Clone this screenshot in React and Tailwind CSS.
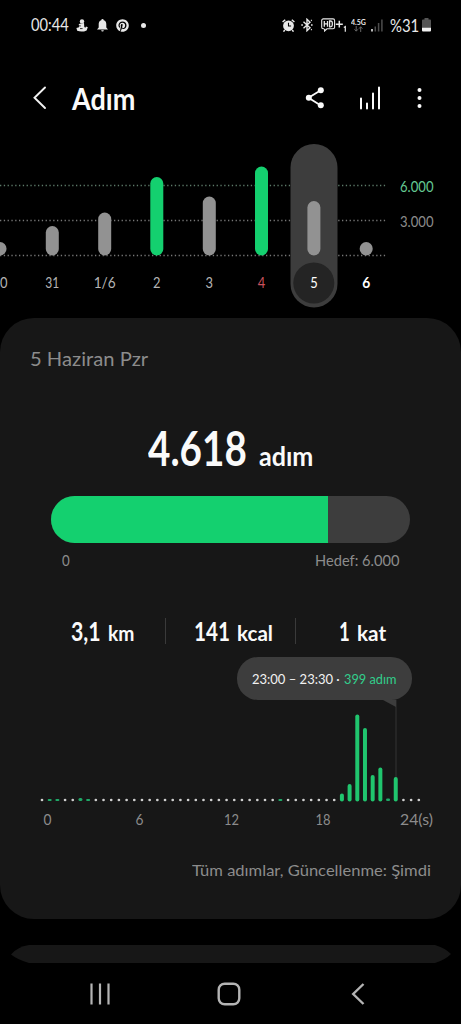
import { useLayoutEffect, useRef } from 'react';
import { FaPinterest } from 'react-icons/fa';

// Text condensed or widened so that it fills exactly `w` pixels.
function Fit({ w, className = '', children }) {
  const inner = useRef(null);
  useLayoutEffect(() => {
    inner.current.style.transform = `scaleX(${w / inner.current.offsetWidth})`;
  }, [w, children]);
  return (
    <span className={`inline-block shrink-0 whitespace-nowrap ${className}`} style={{ width: w }}>
      <span ref={inner} className="inline-block origin-left">{children}</span>
    </span>
  );
}

function ChartText({ x, w, y, size = 14, fill = '#b4b4b4', weight = 400, children }) {
  return (
    <text x={x} y={y} fontSize={size} fill={fill} fontWeight={weight} textLength={w} lengthAdjust="spacingAndGlyphs">
      {children}
    </text>
  );
}

function StatusBar() {
  return (
    <div className="flex h-[50px] items-center pl-[31px] pr-[30px] text-[#e8e8e8]">
      <Fit w={38} className="text-[17px] leading-5">00:44</Fit>
      <svg className="ml-[7px] shrink-0" width="12" height="13" viewBox="0 0 12 13" fill="#e8e8e8">
        <circle cx="6" cy="2.4" r="2.2" />
        <path d="M2.8 5 L8 4 L8.3 8 L9.4 8.8 L10 7.6 L11.8 8.2 L10.6 11.4 Q6 13.6 1.2 11.8 L.4 9 L3 8.2Z" />
        <path d="M1.8 6.9h3M4 9.6h2.6" stroke="#000" strokeWidth=".8" />
      </svg>
      <svg className="ml-[8.5px] shrink-0" width="11" height="13" viewBox="0 0 11 13" fill="#e8e8e8">
        <path d="M5.5 0a1.2 1.2 0 0 1 1.2 1.2C8.7 1.8 9.3 3.3 9.3 5.2V8.5L11 10.6H0L1.7 8.5V5.2C1.7 3.3 2.3 1.8 4.3 1.2A1.2 1.2 0 0 1 5.5 0ZM4.2 11.3h2.6a1.3 1.3 0 0 1-2.6 0Z" />
      </svg>
      <FaPinterest className="ml-[8px] size-[13px] shrink-0" />
      <span className="ml-[12.5px] size-[5px] shrink-0 rounded-full bg-[#e8e8e8]" />

      <svg className="ml-auto shrink-0" width="13" height="13" viewBox="0 0 13 13">
        <circle cx="6.5" cy="6.8" r="5.4" fill="#e8e8e8" />
        <path d="M.6 3 3.2.8M9.8.8 12.4 3M2.8 11 1.5 12.6M10.2 11l1.3 1.6" stroke="#e8e8e8" strokeWidth="1.5" />
        <path d="M6.5 3.7V7h2.6" fill="none" stroke="#000" strokeWidth="1.1" />
      </svg>
      <svg className="ml-[6px] shrink-0" width="12" height="14" viewBox="0 0 12 14" fill="none" stroke="#e8e8e8" strokeWidth="1.4">
        <path d="M2.5 3.8 9 9.8 6 12.7V1.3L9 4.2 2.5 10.2" />
        <path d="M.3 7h1.6M10 7h1.6M10 2.6l.8-.5M10 11.4l.8.5" />
      </svg>
      <svg className="ml-[8px] shrink-0" width="27" height="14" viewBox="0 0 27 14" fill="none" stroke="#e8e8e8" strokeWidth="1.1">
        <path d="M3 10.8H2.3A1.6 1.6 0 0 1 .7 9.2V2.5A1.600 1.600 0 0 1 2.300.9H12A1.600 1.600 0 0 1 13.600 2.500V9.200A1.600 1.600 0 0 1 12 10.800H6L3.600 13V10.800" />
        <path d="M3.300 3v5.800M6.500 3v5.800M3.300 5.900h3.200M8.600 3v5.800h1a1.700 1.700 0 0 0 1.700-1.700V4.700A1.700 1.700 0 0 0 9.600 3Z" strokeWidth="1.300" />
        <path d="M14.800 6.200h7M18.300 2.800v6.800" strokeWidth="1.500" />
        <path d="M22.800 9.400l1.500-.9v5.200" strokeWidth="1.200" />
      </svg>
      <span className="ml-[3px] flex w-[15px] shrink-0 flex-col items-center">
        <Fit w={15} className="text-[7.5px] font-bold leading-[7px]">4.5G</Fit>
        <svg width="9" height="6" viewBox="0 0 9 6" fill="none" stroke="#666" strokeWidth="1">
          <path d="M2.200 0v5M.5 3.300l1.700 1.900 1.700-1.900M6.700 6V.8M5 2.700 6.700.8l1.700 1.900" />
        </svg>
      </span>
      <svg className="ml-[5px] shrink-0" width="12" height="13" viewBox="0 0 12 13">
        <path d="M1 10v2.500" stroke="#e8e8e8" strokeWidth="1.6" />
        <path d="M4.300 7.500v5M7.600 4v8.500M10.900.5v12" stroke="#4d4d4d" strokeWidth="1.500" />
      </svg>
      <Fit w={29} className="ml-[7px] text-[18px] leading-5">%31</Fit>
      <svg className="ml-[3px] shrink-0" width="9" height="14" viewBox="0 0 9 14">
        <path d="M2.500 0h4v1.500H8a1 1 0 0 1 1 1V10H0V2.500a1 1 0 0 1 1-1h1.500Z" fill="#555" />
        <path d="M0 9.800h9V12.500a1 1 0 0 1-1 1H1a1 1 0 0 1-1-1Z" fill="#f2f2f2" />
      </svg>
    </div>
  );
}

function Header() {
  return (
    <header className="mt-[2px] flex h-[92px] items-center pl-[33px] pr-[39px]">
      <svg width="14" height="24" viewBox="0 0 14 24" fill="none" stroke="#f2f2f2" strokeWidth="1.9" strokeLinecap="round">
        <path d="M12 1.500 1.500 11.800 12 22" />
      </svg>
      <Fit w={63} className="ml-[25px] text-[30px] font-bold leading-9 text-[#fafafa]">Adım</Fit>
      <svg className="ml-auto" width="20" height="22" viewBox="0 0 20 22" fill="#fafafa">
        <path d="M15.800 3.300 3.500 10.800l12.300 7.600" fill="none" stroke="#fafafa" strokeWidth="1.800" />
        <circle cx="15.800" cy="3.300" r="3" />
        <circle cx="3.800" cy="10.800" r="3" />
        <circle cx="15.800" cy="18.300" r="3" />
      </svg>
      <svg className="ml-[34px]" width="23" height="24" viewBox="0 0 23 24" stroke="#fafafa" strokeWidth="2" strokeLinecap="round">
        <path d="M2 12.500V22.500M8 17.500v5M14 7.500v15M20 1.500v21" />
      </svg>
      <svg className="ml-[35px]" width="5" height="20" viewBox="0 0 5 20" fill="#fafafa">
        <circle cx="2.500" cy="2" r="2" />
        <circle cx="2.500" cy="10" r="2" />
        <circle cx="2.500" cy="18" r="2" />
      </svg>
    </header>
  );
}

const days = [
  { x: 0, top: 98, label: '30', w: 15 },
  { x: 52.3, top: 82, label: '31', w: 14 },
  { x: 104.7, top: 68.500, label: '1/6', w: 22 },
  { x: 156.800, top: 33, label: '2', w: 7.500, goal: true },
  { x: 209.300, top: 52.500, label: '3', w: 7.500 },
  { x: 261.500, top: 22.500, label: '4', w: 7.500, goal: true, color: '#c9515d' },
  { x: 313.900, top: 57, label: '5', w: 7.500, color: '#ffffff' },
  { x: 366.200, top: 98, label: '6', w: 8, color: '#ffffff', weight: 700 },
];

function WeekChart() {
  return (
    <svg className="block" width="461" height="174" viewBox="0 0 461 174">
      <g strokeWidth="1.300" strokeDasharray="1.300 2.500">
        <path d="M0 41.500H386" stroke="#5c7a69" />
        <path d="M0 76.500H386" stroke="#777" />
        <path d="M0 111.500H386" stroke="#777" />
      </g>
      <rect x="290.500" y="0" width="47" height="163.500" rx="23.500" fill="#3d3d3d" />
      <circle cx="313.800" cy="139" r="20.500" fill="#242424" />
      {days.map((d) => (
        <g key={d.label}>
          <rect x={d.x - 6.500} y={d.top} width="13" height={111.500 - d.top} rx="6.500" fill={d.goal ? '#14d06f' : '#929292'} />
          <ChartText x={d.x - d.w / 2} w={d.w} y={144} size={14.500} fill={d.color} weight={d.weight}>{d.label}</ChartText>
        </g>
      ))}
      <ChartText x={400} w={33.500} y={47.500} size={14.500} fill="#64c993">6.000</ChartText>
      <ChartText x={400} w={33.500} y={82.500} size={14.500} fill="#8c8c8c">3.000</ChartText>
    </svg>
  );
}

const slots = Array.from({ length: 50 }, (_, i) => i);
const hourly = { 1: 2, 2: 2, 5: 3, 6: 2, 31: 2, 39: 8, 40: 17.500, 41: 87, 42: 73.500, 43: 26.500, 44: 34, 45: 2.500, 46: 24.500 };

function DayChart() {
  return (
    <div className="relative mt-[13px] h-[178px]">
      <svg className="block" width="461" height="178" viewBox="0 0 461 178">
        <path d="M396 43V121" stroke="#303030" strokeWidth="1.200" />
        {slots.map((i) => {
          const x = 42 + i * 7.690;
          const h = hourly[i];
          if (!h) return <circle key={i} cx={x} cy="143" r="1.350" fill="#d0d0d0" />;
          return <rect key={i} x={x - 2} y={(h > 3 ? 144.500 : 144) - h} width="4" height={h} rx={Math.min(2, h / 2)} fill={h > 3 ? '#20c56e' : '#20a868'} />;
        })}
        <ChartText x={43.500} w={8} y={168} size={14.500} fill="#8c8c8c">0</ChartText>
        <ChartText x={135.500} w={8} y={168} size={14.500} fill="#8c8c8c">6</ChartText>
        <ChartText x={224} w={15} y={168} size={14.500} fill="#8c8c8c">12</ChartText>
        <ChartText x={315.500} w={15} y={168} size={14.500} fill="#8c8c8c">18</ChartText>
        <ChartText x={400} w={33} y={168} size={14.500} fill="#8c8c8c">24(s)</ChartText>
      </svg>
      <div className="absolute left-[237px] top-0 flex h-[43px] w-[175px] items-center rounded-[21px] bg-[#3d3d3d] pl-[15px] text-[13px] leading-5">
        <Fit w={88} className="text-[#f2f2f2]">23:00 – 23:30 ·</Fit>
        <Fit w={53} className="ml-[4px] text-[#32cf8c]">399 adım</Fit>
        <svg className="absolute left-[146px] top-[43px]" width="14" height="7" viewBox="0 0 14 7">
          <path d="M0 0H13V7Z" fill="#3d3d3d" />
        </svg>
      </div>
    </div>
  );
}

function Stat({ value, valueW, unit, unitW, className }) {
  return (
    <div className={`flex items-baseline justify-center gap-[7px] pt-[2px] font-bold leading-[26px] text-[#fafafa] ${className}`}>
      <Fit w={valueW} className="text-[27px]">{value}</Fit>
      <Fit w={unitW} className="text-[20px]">{unit}</Fit>
    </div>
  );
}

function DayCard() {
  return (
    <main className="h-[601px] rounded-[34px] bg-[#171717] pt-[31px] text-[#8c8c8c]">
      <div className="flex h-5 items-center pl-[30px]">
        <Fit w={118} className="text-[19.5px] leading-5">5 Haziran Pzr</Fit>
      </div>
      <div className="mt-[55px] flex h-[48px] items-baseline gap-[12px] pl-[148px] font-bold leading-[48px] text-[#fafafa]">
        <Fit w={99} className="text-[48px]">4.618</Fit>
        <Fit w={54} className="text-[26px]">adım</Fit>
      </div>
      <div className="mx-[51px] mt-[24px] h-[46.500px] overflow-hidden rounded-full bg-[#3d3d3d]">
        <div className="h-full w-[276.500px] bg-[#14d06f]" />
      </div>
      <div className="mt-[7.500px] flex h-5 items-center justify-between pl-[61.5px] pr-[61px] text-[15px] leading-5">
        <Fit w={8}>0</Fit>
        <Fit w={85}>Hedef: 6.000</Fit>
      </div>
      <div className="mt-[48px] flex h-[26px] items-center pl-[39px]">
        <Stat className="w-[126px]" value="3,1" valueW={30} unit="km" unitW={26} />
        <span className="h-full w-px bg-[#3a3a3a]" />
        <Stat className="w-[129px] pl-[5px]" value="141" valueW={36} unit="kcal" unitW={36} />
        <span className="h-full w-px bg-[#3a3a3a]" />
        <Stat className="w-[133px]" value="1" valueW={11} unit="kat" unitW={29} />
      </div>
      <DayChart />
      <div className="mt-[25px] flex h-5 items-center justify-end pr-[30px]">
        <Fit w={239} className="text-[16px] leading-5">Tüm adımlar, Güncellenme: Şimdi</Fit>
      </div>
    </main>
  );
}

export default function App() {
  return (
    <div className="h-[1024px] w-[461px] overflow-hidden bg-black font-['Lato','Noto_Sans',sans-serif]">
      <StatusBar />
      <Header />
      <WeekChart />
      <DayCard />
      <svg className="mt-[26px] block" width="461" height="18" viewBox="0 0 461 18">
        <path d="M11 9.500Q17 2 29 0H435Q445 3 451 9Q445 15 435 18H29Q18 15 11 9.500Z" fill="#171717" />
      </svg>
      <nav className="flex h-[61px] items-center pl-[89px] pr-[96px]">
        <svg width="22" height="22" viewBox="0 0 22 22" stroke="#b4b4b4" strokeWidth="2.200">
          <path d="M2.500 .5v21M11 .5v21M19.500 .5v21" />
        </svg>
        <svg className="ml-[106px]" width="24" height="24" viewBox="0 0 24 24" fill="none" stroke="#b4b4b4" strokeWidth="2.400">
          <rect x="1.700" y="1.700" width="20.600" height="20.600" rx="6" />
        </svg>
        <svg className="ml-auto" width="14" height="22" viewBox="0 0 14 22" fill="none" stroke="#b4b4b4" strokeWidth="2.400">
          <path d="M12.500 1 2.200 11l10.300 10" />
        </svg>
      </nav>
    </div>
  );
}
